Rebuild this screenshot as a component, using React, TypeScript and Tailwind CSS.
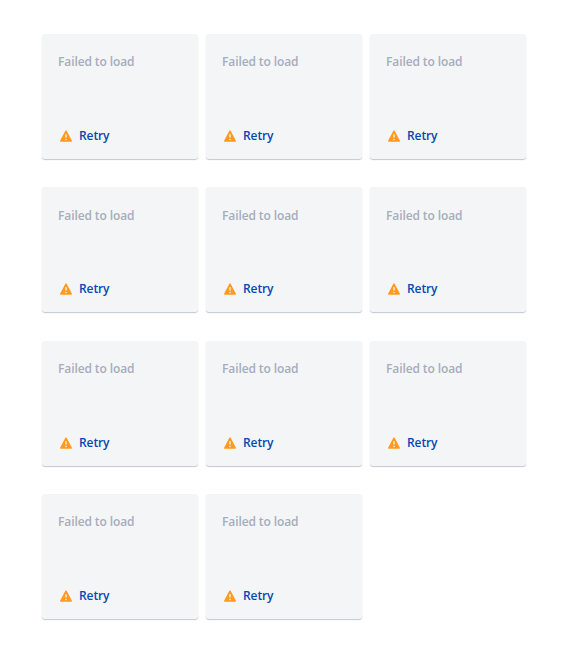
const items = Array.from({ length: 11 });

function Warn() {
  return (
    <svg width="16" height="16" viewBox="0 0 16 16" className="block">
      <path d="M7.2 3.1c.35-.65 1.25-.65 1.6 0l5 9.3c.35.65-.1 1.4-.8 1.4H3c-.7 0-1.15-.75-.8-1.4l5-9.3z" fill="#ff991f" />
      <rect x="7.3" y="6" width="1.4" height="3.8" rx=".7" fill="#f4f5f7" />
      <circle cx="8" cy="11.5" r=".8" fill="#f4f5f7" />
    </svg>
  );
}

export default function App() {
  return (
    <div className="bg-white w-[571px] h-[649px] pt-[34px] pl-[42px] font-['Open_Sans','Liberation_Sans',sans-serif]">
      <div className="grid grid-cols-[156px_156px_156px] gap-x-2 gap-y-[28.33px]">
        {items.map((_, i) => (
          <div key={i} className="h-[125px] bg-[#f4f5f7] rounded-[3px] shadow-[0_1px_1px_rgba(9,30,66,0.25)] flex flex-col justify-between pl-4 pt-[20.3px] pb-[15px]">
            <div className="text-[12px] leading-4 font-semibold tracking-[-0.1px] text-[#a5adba]">Failed to load</div>
            <div className="flex items-center gap-[5px] h-4">
              <Warn />
              <span className="text-[12px] leading-4 font-semibold tracking-[-0.1px] text-[#0747b4]">Retry</span>
            </div>
          </div>
        ))}
      </div>
    </div>
  );
}
